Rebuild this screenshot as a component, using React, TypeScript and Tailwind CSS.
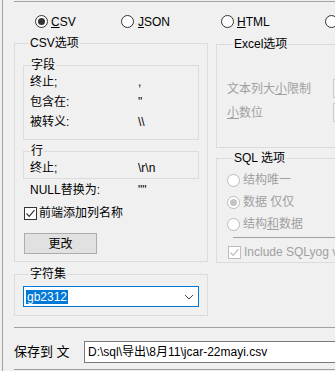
import { ReactNode } from 'react'

function Radio({ checked = false, disabled = false }: { checked?: boolean; disabled?: boolean }) {
  return (
    <span
      className={`flex h-[13px] w-[13px] shrink-0 items-center justify-center rounded-full border bg-white ${
        disabled ? 'border-[#bcbcbc]' : 'border-[#333333]'
      }`}
    >
      {checked && (
        <span className={`h-[7px] w-[7px] rounded-full ${disabled ? 'bg-[#c4c4c4]' : 'bg-[#333333]'}`} />
      )}
    </span>
  )
}

function Check({ disabled = false }: { disabled?: boolean }) {
  const c = disabled ? '#bcbcbc' : '#333333'
  return (
    <span
      className={`flex h-[13px] w-[13px] shrink-0 items-center justify-center border bg-white ${
        disabled ? 'border-[#bcbcbc]' : 'border-[#333333]'
      }`}
    >
      <svg width="11" height="11" viewBox="0 0 11 11">
        <path d="M1.5 5.5 L4.2 8.3 L9.5 2.2" fill="none" stroke={c} strokeWidth="1.2" />
      </svg>
    </span>
  )
}

function Group({ label, className = '', children }: { label: string; className?: string; children: ReactNode }) {
  return (
    <fieldset className={`m-0 min-w-0 border border-[#dcdcdc] p-0 ${className}`}>
      <legend className="ml-[6px] px-[1px] leading-[14px]">{label}</legend>
      {children}
    </fieldset>
  )
}

export default function App() {
  return (
    <div className="flex h-[371px] w-[335px] overflow-hidden bg-[#f0f0f0] pl-[2px] font-['Liberation_Sans','Noto_Sans_CJK_SC',sans-serif] text-[12px] leading-[14px] text-black">
      <div className="flex-1 border-l border-[#a0a0a0] pl-[11px]">
        <div className="mt-[1px] w-[400px] border-t border-[#a0a0a0]" />

        {/* format radios */}
        <div className="mt-[13px] flex h-[13px] items-center pl-[21px]">
          <div className="flex w-[86px] shrink-0 items-center gap-[3px]">
            <Radio checked />
            <span><span className="underline">C</span>SV</span>
          </div>
          <div className="flex w-[100px] shrink-0 items-center gap-[4px]">
            <Radio />
            <span><span className="underline">J</span>SON</span>
          </div>
          <div className="flex w-[104px] shrink-0 items-center gap-[3px]">
            <Radio />
            <span><span className="underline">H</span>TML</span>
          </div>
          <div className="flex shrink-0 items-center gap-[3px]">
            <Radio />
            <span>XML</span>
          </div>
        </div>

        <div className="mt-[8px] flex gap-[8px]">
          {/* left column */}
          <div className="w-[194px] shrink-0">
            <Group label="CSV选项" className="px-[8px] pb-[7px]">
              <Group label="字段" className="mt-[8px] w-[176px] pb-[7px]">
                <div className="grid grid-cols-[108px_1fr] pl-[6px] [&>span]:flex [&>span]:h-[20px] [&>span]:items-center">
                  <span>终止;</span>
                  <span>,</span>
                  <span>包含在:</span>
                  <span>"</span>
                  <span>被转义:</span>
                  <span>\\</span>
                </div>
              </Group>
              <Group label="行" className="mt-[4px] w-[176px] pb-[1px]">
                <div className="grid h-[19px] grid-cols-[108px_1fr] items-center pl-[6px]">
                  <span>终止;</span>
                  <span>\r\n</span>
                </div>
              </Group>
              <div className="mt-[1px] grid h-[20px] grid-cols-[108px_1fr] items-center pl-[7px]">
                <span>NULL替换为:</span>
                <span>""</span>
              </div>
              <div className="mt-[3px] flex h-[20px] items-center pl-[1px]">
                <Check />
                <span className="ml-[2px]">前端添加列名称</span>
              </div>
              <button className="ml-[1px] mt-[10px] flex h-[21px] w-[73px] items-center justify-center border border-[#adadad] bg-[#e1e1e1]">
                更改
              </button>
            </Group>

            <Group label="字符集" className="mt-[5px] px-[8px] pb-[8px]">
              <div className="mt-[5px] flex h-[21px] w-[176px] items-center justify-between border border-[#0078d7] bg-white pl-[2px] pr-[4px]">
                <span className="bg-[#0078d7] px-[1px] leading-[14px] text-white">gb2312</span>
                <svg width="10" height="6" viewBox="0 0 10 6">
                  <path d="M1 1 L5 5 L9 1" fill="none" stroke="#444444" strokeWidth="1" />
                </svg>
              </div>
            </Group>
          </div>

          {/* right column */}
          <div className="mt-[1px] w-[200px] shrink-0">
            <Group label="Excel选项" className="pb-[24px] pl-[10px]">
              <div className="mt-[27px] flex h-[21px] items-center text-[#a0a0a0]">
                <span className="w-[106px] shrink-0">文本列大<span className="underline">小</span>限制</span>
                <span className="h-[19px] w-[60px] border border-[#cccccc] bg-[#f0f0f0]" />
              </div>
              <div className="mt-[3px] flex h-[21px] items-center text-[#a0a0a0]">
                <span className="w-[106px] shrink-0"><span className="underline">小</span>数位</span>
                <span className="h-[19px] w-[60px] border border-[#cccccc] bg-[#f0f0f0]" />
              </div>
            </Group>

            <Group label="SQL 选项" className="mt-[3px] pb-[3px] pl-[10px]">
              <div className="mt-[4px] text-[#a0a0a0]">
                <div className="flex h-[22px] items-center gap-[3px]">
                  <Radio disabled />
                  <span>结构唯一</span>
                </div>
                <div className="flex h-[22px] items-center gap-[3px]">
                  <Radio disabled checked />
                  <span>数据 仅仅</span>
                </div>
                <div className="flex h-[22px] items-center gap-[3px]">
                  <Radio disabled />
                  <span>结构<span className="underline">和</span>数据</span>
                </div>
                <div className="ml-[6px] mt-[2px] border-t border-[#a0a0a0]" />
                <div className="mt-[7px] flex h-[14px] items-center gap-[3px] pl-[1px] whitespace-nowrap">
                  <Check disabled />
                  <span>Include SQLyog version</span>
                </div>
              </div>
            </Group>
          </div>
        </div>

        <div className="mt-[11px] w-[400px] border-t border-[#a0a0a0]" />

        {/* save path */}
        <div className="mt-[13px] flex h-[22px] items-center">
          <span className="w-[70px] shrink-0 text-[13px]">保存到 文</span>
          <div className="flex h-[22px] w-[300px] shrink-0 items-center border border-[#7a7a7a] bg-white pl-[3px] whitespace-nowrap">
            D:\sql\导出\8月11\jcar-22mayi.csv
          </div>
        </div>

        <div className="mt-[6px] w-[400px] border-t border-[#a0a0a0]" />
      </div>
    </div>
  )
}
